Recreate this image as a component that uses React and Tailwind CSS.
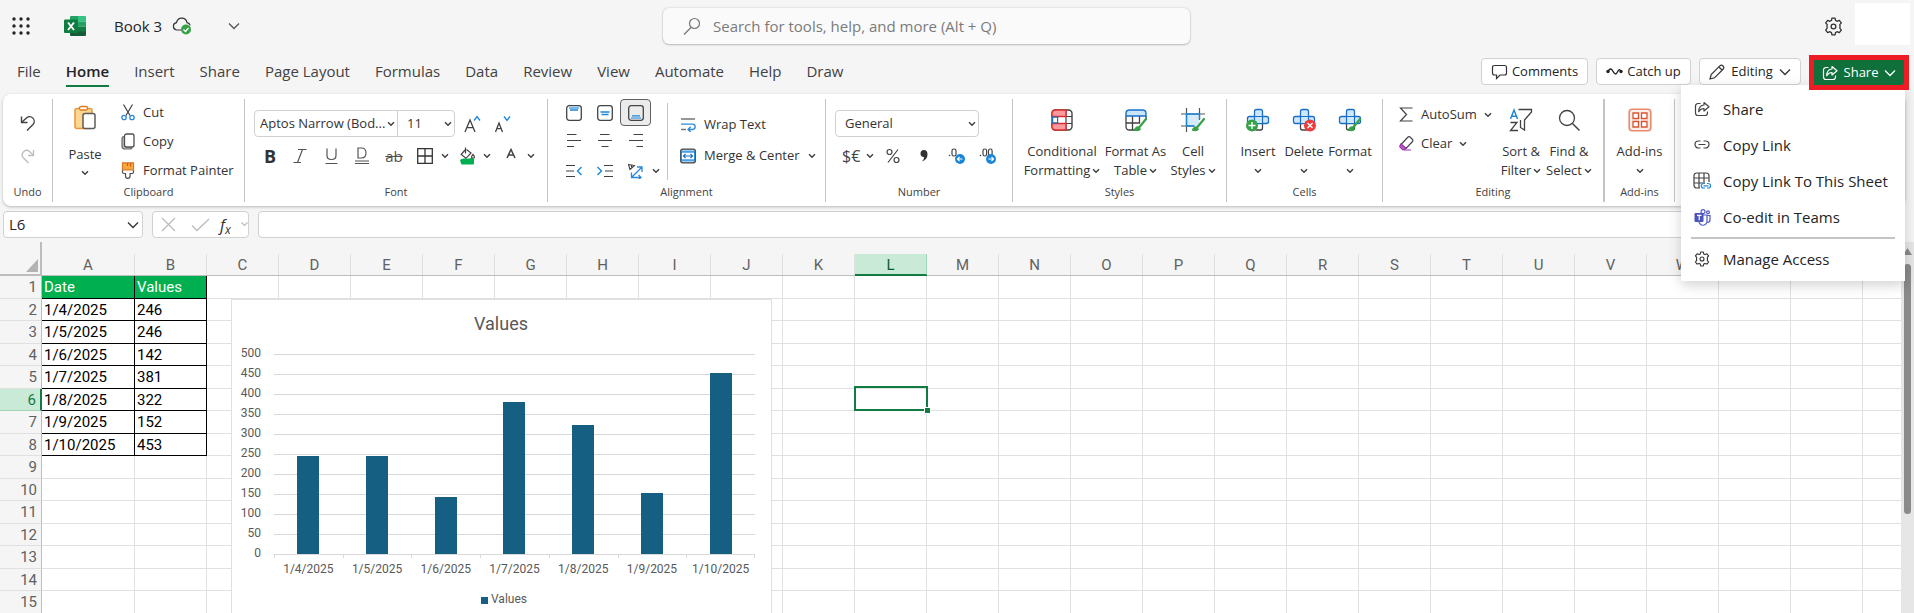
import { useState } from 'react';

const COLUMNS = 'CDEFGHIJKLMNOPQRSTUVWXYZ'.split('');
const ROWS = [1, 2, 3, 4, 5, 6, 7, 8, 9, 10, 11, 12, 13, 14, 15];

const DATA = [
    { date: '1/4/2025', value: 246 },
    { date: '1/5/2025', value: 246 },
    { date: '1/6/2025', value: 142 },
    { date: '1/7/2025', value: 381 },
    { date: '1/8/2025', value: 322 },
    { date: '1/9/2025', value: 152 },
    { date: '1/10/2025', value: 453 },
];

const TABS = ['File', 'Home', 'Insert', 'Share', 'Page Layout', 'Formulas', 'Data', 'Review', 'View', 'Automate', 'Help', 'Draw'];

function Svg({ w = 16, h = 16, className = '', children }) {
    return (
        <svg width={w} height={h} viewBox={`0 0 ${w} ${h}`} fill="none" stroke="#424242" strokeWidth="1.2" className={`shrink-0 ${className}`} aria-hidden="true">
            {children}
        </svg>
    );
}

function Chevron({ className = '' }) {
    return (
        <Svg w={8} h={6} className={className}>
            <path d="M1 1.2 4 4.2 7 1.2" strokeWidth="1.5" />
        </Svg>
    );
}

function WideChevron({ stroke = '#333' }) {
    return (
        <Svg w={12} h={8}>
            <path d="M1 1.5 6 6.5 11 1.5" stroke={stroke} strokeWidth="1.3" />
        </Svg>
    );
}

function ShareIcon({ stroke = '#424242' }) {
    return (
        <Svg w={16} h={16}>
            <path d="M6.5 2.5H4A2.5 2.5 0 0 0 1.5 5v7A2.5 2.5 0 0 0 4 14.5h7a2.5 2.5 0 0 0 2.5-2.5v-1.5" stroke={stroke} />
            <path d="M10 1.500 15 5.800 10 10V7.500C7.500 7.500 6 8.500 4.700 10.700 4.800 7 6.500 4.200 10 4Z" stroke={stroke} strokeLinejoin="round" />
        </Svg>
    );
}

function GearIcon({ size = 16 }) {
    return (
        <svg width={size} height={size} viewBox="0 0 16 16" fill="none" stroke="#333" strokeWidth="1.1" strokeLinejoin="round" className="shrink-0" aria-hidden="true">
            <path d="M6.7 1h2.600l.4 1.900 1.300.7 1.900-.8 1.700 2.100-1.300 1.500.2 1.600-.2 1.400 1.300 1.600-1.700 2.100-1.900-.7-1.300.7-.4 1.900H6.700l-.4-1.900-1.300-.7-1.900.7L1.400 11l1.300-1.600L2.500 8l.2-1.600L1.400 4.900l1.700-2.100 1.900.8 1.300-.7Z" />
            <circle cx="8" cy="8" r="2" />
        </svg>
    );
}

function ExcelLogo() {
    return (
        <svg width="22" height="22" viewBox="0 0 22 22" aria-hidden="true">
            <path d="M6 2a1 1 0 0 1 1-1h7v5.500H6Z" fill="#21a366" />
            <path d="M14 1h7a1 1 0 0 1 1 1v4.500h-8Z" fill="#33c481" />
            <path d="M6 6.500h8v5H6Z" fill="#107c41" />
            <path d="M14 6.500h8v5h-8Z" fill="#21a366" />
            <path d="M6 11.500h8V17H6Z" fill="#185c37" />
            <path d="M14 11.500h8V17h-8Z" fill="#107c41" />
            <path d="M6 16.500h16V20a1 1 0 0 1-1 1H7a1 1 0 0 1-1-1Z" fill="#185c37" />
            <rect x="0" y="4.5" width="14" height="13.5" rx="1" fill="#107c41" />
            <path d="m4 7.500 6 7.500M10 7.500 4 15" stroke="#fff" strokeWidth="1.9" />
        </svg>
    );
}

function UndoIcon() {
    return (
        <Svg w={16} h={16}>
            <path d="M1.500 1.500v6h6" strokeWidth="1.4" />
            <path d="M2 7 6.500 3a4.600 4.600 0 0 1 6.500 6.500L7 15.500" strokeWidth="1.4" />
        </Svg>
    );
}

function RedoIcon() {
    return (
        <Svg w={16} h={16}>
            <path d="M13.500 2v5.500H8" stroke="#bdbdbd" strokeWidth="1.3" />
            <path d="M13 7 9.500 3.500a4.400 4.400 0 0 0-6.200 6.200L8.500 15" stroke="#bdbdbd" strokeWidth="1.3" />
        </Svg>
    );
}

function PasteIcon() {
    return (
        <Svg w={24} h={26}>
            <rect x="2" y="3.5" width="17" height="20" rx="2" fill="#fbd78f" stroke="#e8963a" strokeWidth="1.5" />
            <rect x="6.5" y="1.5" width="8" height="3.5" rx="1.5" fill="#fff" stroke="#e07a1f" strokeWidth="1.3" />
            <rect x="10" y="8.5" width="12" height="15" rx="2" fill="#fff" stroke="#5c5c5c" strokeWidth="1.5" />
        </Svg>
    );
}

function CutIcon() {
    return (
        <Svg w={14} h={17}>
            <path d="M2.500.5 9 11.500M11.500.5 5 11.500" />
            <circle cx="3" cy="13.5" r="2.2" stroke="#2b88d8" strokeWidth="1.3" />
            <circle cx="11" cy="13.5" r="2.2" stroke="#2b88d8" strokeWidth="1.3" />
        </Svg>
    );
}

function CopyIcon() {
    return (
        <Svg w={14} h={17}>
            <path d="M3 3.500A2 2 0 0 0 1 5.500v8a2.500 2.500 0 0 0 2.500 2.500H9a2 2 0 0 0 2-1.500" fill="#bdbdbd" stroke="#666" />
            <rect x="3.5" y="1" width="9.5" height="13" rx="2" fill="#fff" stroke="#4d4d4d" strokeWidth="1.3" />
        </Svg>
    );
}

function PainterIcon() {
    return (
        <Svg w={14} h={17}>
            <path d="M1.500 8v2a1.500 1.500 0 0 0 1.500 1.500h1.500V14a2.300 2.300 0 0 0 4.600 0v-2.500H11a1.500 1.500 0 0 0 1.500-1.500V8" fill="#fff" stroke="#4d4d4d" />
            <path d="M1.500.8h11v7h-11Z" fill="#f7a93b" stroke="#d9772b" />
            <path d="M6.500 1v3M9.500 1v3.500" stroke="#c75b12" />
        </Svg>
    );
}

function BordersIcon() {
    return (
        <Svg w={16} h={16}>
            <path d="M.7.7h14.600v14.600H.7ZM8 .7v14.600M.7 8h14.600" stroke="#333" strokeWidth="1.3" />
        </Svg>
    );
}

function BucketIcon() {
    return (
        <Svg w={16} h={18}>
            <path d="M0 13q2-2 5-1.500t6-.5h2l1 1v4.500q0 1-1 1H2q-1 0-1-1Z" fill="#00b050" stroke="none" />
            <path d="M5 3 1.200 7.500 6 11.300 11 6 6.500 2.500M5.500.5v6" fill="#fff" stroke="#444" />
            <path d="M13 7.500q-3 3.500 0 3.500t0-3.500Z" stroke="#444" />
        </Svg>
    );
}

function VAlignIcon({ pos }) {
    return (
        <Svg w={16} h={16}>
            <rect x=".7" y=".7" width="14.6" height="14.6" rx="2.5" stroke="#444" strokeWidth="1.3" />
            {pos === 'top' && <path d="M3 2.800h10" stroke="#7db9ea" strokeWidth="2.2" />}
            {pos === 'top' && <path d="M4 5h8" stroke="#1a86d9" strokeWidth="1.3" />}
            {pos === 'middle' && <path d="M3.500 7h9M4.500 9.500h7" stroke="#1a86d9" strokeWidth="1.3" />}
            {pos === 'bottom' && <path d="M3 13h10" stroke="#7db9ea" strokeWidth="2.2" />}
            {pos === 'bottom' && <path d="M4 10.800h8" stroke="#1a86d9" strokeWidth="1.3" />}
        </Svg>
    );
}

const HALIGN = {
    left: 'M1 1.5h9.5M1 7.5h14M1 13.5h7',
    center: 'M3 1.5h9.5M1 7.5h14M4.5 13.5h7',
    right: 'M5.5 1.5H15M1 7.5h14M8.5 13.5H15',
};

function HAlignIcon({ pos }) {
    return (
        <Svg w={16} h={15}>
            <path d={HALIGN[pos]} />
        </Svg>
    );
}

function IndentIcon({ out }) {
    return (
        <Svg w={16} h={14}>
            <path d={out ? 'M0 1.5h9M0 7h8M0 12.5h9' : 'M7 1.5h9M8 7h8M7 12.5h9'} />
            <path d={out ? 'M15.5 3 11.5 7l4 4' : 'M.5 3l4 4-4 4'} stroke="#1a86d9" strokeWidth="1.4" />
        </Svg>
    );
}

function OrientationIcon() {
    return (
        <Svg w={16} h={16}>
            <path d="m.5 1.500 6 1-4.500 4ZM3 1.800l1 3" stroke="#444" strokeWidth="1.1" />
            <path d="M4 14 13.500 4.500M9 4h5v5M3.500 9.500v5H13M10.500 12l2.500 2.500-2 1.500" stroke="#2b88d8" strokeWidth="1.3" />
        </Svg>
    );
}

function WrapIcon() {
    return (
        <Svg w={16} h={15}>
            <path d="M1 2h14M1 12.500h5" stroke="#777" strokeWidth="1.3" />
            <path d="M1 7.200h11.500a2.500 2.500 0 0 1 0 5.300H8.500M10.700 9.800 8 12.500l2.700 2.500" stroke="#2b88d8" strokeWidth="1.3" />
        </Svg>
    );
}

function MergeIcon() {
    return (
        <Svg w={16} h={16}>
            <rect x=".7" y="1.2" width="14.6" height="13.6" rx="2" stroke="#444" strokeWidth="1.3" fill="#9dcbf1" />
            <rect x="1.3" y="4" width="13.4" height="8" fill="#fff" stroke="#1a86d9" />
            <path d="M3.500 8h9M5.500 6l-2 2 2 2M10.500 6l2 2-2 2" stroke="#1a6fc4" />
        </Svg>
    );
}

function DecimalIcon({ more }) {
    return (
        <Svg w={18} h={18}>
            <circle cx="1.5" cy="8.5" r=".8" fill="#444" stroke="none" />
            <rect x="4" y="2" width={more ? 3.6 : 4} height="7" rx="1.8" />
            {more && <rect x="9.5" y="2" width="3.6" height="7" rx="1.8" />}
            <circle cx="12" cy="12" r="5" fill="#1a86d9" stroke="none" />
            <path d={more ? 'M9.5 12h5M12.5 10l2 2-2 2' : 'M14.5 12h-5M11.5 10l-2 2 2 2'} stroke="#fff" />
        </Svg>
    );
}

function Brush({ x, y }) {
    return (
        <g>
            <path d={`M${x} ${y}l-6.500 8`} stroke="#37a148" strokeWidth="2.2" strokeLinecap="round" />
            <path d={`M${x - 7} ${y + 8}q-4-1-4.500 3.500 4 1 6-1Z`} fill="#37a148" stroke="#37a148" strokeWidth="1" />
        </g>
    );
}

function ConditionalIcon() {
    return (
        <Svg w={24} h={24}>
            <rect x="2" y="2" width="20" height="20" rx="3.5" strokeWidth="1.4" />
            <path d="M16 2v20M2 8.500h20M2 15.500h20" />
            <path d="M16 2H5.500Q2 2 2 5.500v3h14ZM16 22H5.500Q2 22 2 18.500v-3h14Z" fill="#ff9a9f" stroke="#d92f2f" strokeWidth="1.4" />
            <path d="M2.600 9.200h5v5.600h-5Z" fill="#fff" stroke="#1a6fc4" />
        </Svg>
    );
}

function FormatTableIcon() {
    return (
        <Svg w={24} h={24}>
            <path d="M2 8v10.500Q2 22 5.500 22H12M8.500 8v14M15.500 8v7M2 15h14M22 8v4" strokeWidth="1.3" />
            <path d="M2 8V5.500Q2 2 5.500 2h13Q22 2 22 5.500V8Z" fill="#c9e3f8" stroke="#1a6fc4" strokeWidth="1.4" />
            <Brush x={22} y={11} />
        </Svg>
    );
}

function CellStylesIcon() {
    return (
        <Svg w={24} h={24}>
            <path d="M5.500 6h13v12h-13Z" fill="#d5eafa" stroke="none" />
            <path d="M5.500 0v24M18.500 0v12M0 6h24M0 18h13" stroke="#555" />
            <path d="M13.500 18h-8V6h13v5" stroke="#1a86d9" strokeWidth="1.4" />
            <Brush x={23} y={11} />
        </Svg>
    );
}

function CellsIcon({ kind }) {
    return (
        <Svg w={24} h={24}>
            <path d="M8.500 15v5q0 2 2 2h4q2 0 2-2v-5" strokeWidth="1.3" />
            <path d="M8.500 8.500V3.500Q8.500 1.500 10.500 1.500h4Q16.500 1.500 16.500 3.500v5h4Q22.500 8.500 22.500 10.500v3q0 2-2 2h-17q-2 0-2-2v-3q0-2 2-2Z" fill="#d0e7fa" stroke="#1a6fc4" strokeWidth="1.3" />
            <path d="M8.500 8.500h8v7h-8Z" stroke="#1a6fc4" fill="#d0e7fa" />
            {kind === 'insert' && <circle cx="6" cy="17.5" r="6" fill="#37a148" stroke="none" />}
            {kind === 'insert' && <path d="M6 14v7M2.500 17.500h7" stroke="#fff" strokeWidth="1.4" />}
            {kind === 'delete' && <circle cx="18" cy="17.5" r="6" fill="#ee3b3b" stroke="none" />}
            {kind === 'delete' && <path d="m15.500 15 5 5M20.500 15l-5 5" stroke="#fff" strokeWidth="1.4" />}
            {kind === 'format' && <Brush x={22} y={11} />}
        </Svg>
    );
}

function SortIcon() {
    return (
        <Svg w={24} h={24}>
            <path d="M9.500 1.500h13v2.500l-7 8v10l-4-2.500V12" fill="#fff" strokeWidth="1.3" />
            <path d="M1.500 11 5 2l3.500 9M2.500 8.200h5" stroke="#1a86d9" strokeWidth="1.4" />
            <path d="M1.500 14.500H8l-6.500 8H9" strokeWidth="1.3" />
        </Svg>
    );
}

function FindIcon() {
    return (
        <Svg w={24} h={24}>
            <circle cx="10" cy="10" r="7.5" strokeWidth="1.3" />
            <path d="m15.500 15.500 7 7" strokeWidth="1.5" />
        </Svg>
    );
}

function AddinsIcon() {
    return (
        <Svg w={24} h={24}>
            <rect x="1.2" y="1.2" width="21.6" height="21.6" rx="3" stroke="#ea8a6c" fill="#fdeee9" strokeWidth="1.6" />
            <path d="M5 5h5.500v5.500H5ZM13.500 5H19v5.500h-5.500ZM5 13.500h5.500V19H5ZM13.500 13.500H19V19h-5.500Z" fill="#fff" stroke="#d65532" strokeWidth="1.3" />
        </Svg>
    );
}

function EraserIcon() {
    return (
        <Svg w={15} h={15}>
            <path d="m2 8.500 7-7.500q1-.8 2 0l2.500 2.500q.8 1 0 2L7 12.500Z" fill="#fff" stroke="#444" />
            <path d="m2 8-1 1.500q-.5 1 .3 1.800l2 2q.7.7 1.700.2L7 12.500Z" fill="#c25fcb" stroke="#9b2fae" />
            <path d="M5 14h7" stroke="#9b2fae" />
        </Svg>
    );
}

function LinkIcon() {
    return (
        <Svg w={16} h={16}>
            <path d="M6.500 4H4.500a3.500 3.500 0 0 0 0 7h2M9.500 4h2a3.500 3.500 0 0 1 0 7h-2M4.500 7.500h7" />
        </Svg>
    );
}

function SheetLinkIcon() {
    return (
        <Svg w={18} h={18}>
            <path d="M7 16H4Q1 16 1 13V4q0-3 3-3h9q3 0 3 3v6M6 1v15M11 1v10M1 6h15M1 11h9" />
            <path d="M12 11.500h-1.500a2.200 2.200 0 0 0 0 4.500H12M14 11.500h1.300a2.200 2.200 0 0 1 0 4.500H14M10.500 13.800h5" stroke="#2b88d8" />
        </Svg>
    );
}

function TeamsIcon() {
    return (
        <Svg w={17} h={17}>
            <circle cx="9" cy="2.7" r="2" stroke="#5059c9" />
            <circle cx="14" cy="3.3" r="1.4" stroke="#5059c9" />
            <path d="M8 6h5v6a3.800 3.800 0 0 1-8 .5M13 6.500h3v4.500q0 2-2.500 2.500" stroke="#5059c9" />
            <rect x=".5" y="4" width="9" height="9" rx="1" fill="#4b53bc" stroke="none" />
            <path d="M3 6.300h4.500M5.200 6.300v5" stroke="#fff" />
        </Svg>
    );
}

function Waffle() {
    return (
        <svg width="18" height="18" viewBox="0 0 18 18" fill="#242424" aria-hidden="true">
            {[2, 9, 16].map((y) => [2, 9, 16].map((x) => <circle key={`${x}-${y}`} cx={x} cy={y} r="1.7" />))}
        </svg>
    );
}

function CloudSaved() {
    return (
        <Svg w={20} h={18}>
            <path d="M9 13H4.500a3.700 3.700 0 0 1 0-7.300Q5.500 1.200 9.800 1.200t5.200 4.500q2.500.3 3.200 2.600" stroke="#333" />
            <circle cx="14" cy="12.5" r="5" fill="#37a148" stroke="none" />
            <path d="m11.500 12.500 2 2 3-3.500" stroke="#fff" strokeWidth="1.4" />
        </Svg>
    );
}

function RibbonGroup({ label, className, children }) {
    return (
        <section className={`flex shrink-0 flex-col border-[#c4c4c4] ${className}`} aria-label={label}>
            <div className="flex min-h-0 flex-1">{children}</div>
            <div className="mb-[2px] text-center text-[11px] leading-4 text-[#424242]">{label}</div>
        </section>
    );
}

function BigButton({ icon, lines, className = '' }) {
    return (
        <button type="button" className={`flex flex-col items-center whitespace-nowrap pt-[9px] text-[13px] leading-[19px] ${className}`}>
            {icon}
            <span className="mt-[10px]">{lines[0]}</span>
            <span className="flex h-[19px] items-center gap-[2px]">{lines[1]}<Chevron /></span>
        </button>
    );
}

function RibbonSelect({ label, options, className }) {
    return (
        <label className={`relative flex items-center ${className}`}>
            <select aria-label={label} className="h-full w-full appearance-none bg-transparent pl-[5px] text-[13px] outline-none">
                {options.map((o) => <option key={o}>{o}</option>)}
            </select>
            <Chevron className="pointer-events-none absolute right-[2px]" />
        </label>
    );
}

function TitleBar() {
    return (
        <div className="flex h-[52px] items-start">
            <div className="flex h-[52px] w-[663px] items-center pl-3">
                <button type="button" aria-label="Apps"><Waffle /></button>
                <div className="ml-[34px]"><ExcelLogo /></div>
                <span className="ml-7 text-[15px] text-[#242424]">Book 3</span>
                <div className="ml-[10px]"><CloudSaved /></div>
                <button type="button" aria-label="File details" className="ml-9"><WideChevron stroke="#555" /></button>
            </div>
            <label className="mt-2 flex h-9 w-[527px] items-center rounded-md bg-[#fafafa] pl-5 shadow-[0_0_2px_rgba(0,0,0,0.2),0_1px_2px_rgba(0,0,0,0.2)]">
                <Svg w={18} h={18}>
                    <circle cx="11.5" cy="6.5" r="5" stroke="#777" />
                    <path d="M8 10.500 1 17.500" stroke="#777" />
                </Svg>
                <input aria-label="Search" placeholder="Search for tools, help, and more (Alt + Q)" className="ml-3 flex-1 bg-transparent text-[15px] outline-none placeholder:text-[#7a7a7a]" />
            </label>
            <div className="flex flex-1 items-start justify-end gap-3 pr-1">
                <button type="button" aria-label="Settings" className="mt-[17px]"><GearIcon size={19} /></button>
                <div className="mt-[3px] h-[42px] w-[55px] bg-white" />
            </div>
        </div>
    );
}

function MenuItem({ icon, children }) {
    return (
        <button type="button" role="menuitem" className="flex h-9 w-full items-center pl-3">
            <span className="flex w-[18px] justify-center">{icon}</span>
            <span className="ml-3">{children}</span>
        </button>
    );
}

function ShareMenu() {
    return (
        <div role="menu" className="absolute right-1 top-[30px] w-56 bg-white pt-[6px] pb-1 text-[15px] text-[#242424] shadow-[0_4px_12px_rgba(0,0,0,0.18)]">
            <MenuItem icon={<ShareIcon />}>Share</MenuItem>
            <MenuItem icon={<LinkIcon />}>Copy Link</MenuItem>
            <MenuItem icon={<SheetLinkIcon />}>Copy Link To This Sheet</MenuItem>
            <MenuItem icon={<TeamsIcon />}>Co-edit in Teams</MenuItem>
            <div className="mx-[10px] my-[2px] h-[2px] bg-[#c4c4c4]" />
            <MenuItem icon={<GearIcon size={16} />}>Manage Access</MenuItem>
        </div>
    );
}

function TabBar({ active, onSelect }) {
    const pill = 'mt-[6px] flex h-[27px] items-center justify-center rounded border border-[#d1d1d1] bg-white text-[13px] text-[#242424]';
    return (
        <div className="flex h-[42px] items-start pr-[5px]">
            <nav className="flex gap-[25px] pl-[17px] pt-[7px]">
                {TABS.map((tab) => (
                    <button
                        key={tab}
                        type="button"
                        onClick={() => onSelect(tab)}
                        className={`border-b-2 pb-[2px] text-[15px] leading-6 whitespace-nowrap ${tab === active ? 'border-[#107c41] font-semibold text-[#242424]' : 'border-transparent text-[#424242]'}`}
                    >
                        {tab}
                    </button>
                ))}
            </nav>
            <div className="ml-auto flex gap-2">
                <button type="button" className={`${pill} w-[107px] gap-1`}>
                    <Svg w={17} h={16}>
                        <path d="M3.500 1.500h10q2 0 2 2v5.500q0 2-2 2H9L5.500 14.500V11h-2q-2 0-2-2V3.500q0-2 2-2Z" stroke="#333" />
                    </Svg>
                    Comments
                </button>
                <button type="button" className={`${pill} w-[95px] gap-1`}>
                    <Svg w={17} h={12}>
                        <path d="M2 5.500Q4.500 1 6.500 4.500t3 3.500 2.500-3 3 .5" stroke="#222" strokeWidth="1.4" />
                        <circle cx="2" cy="5.5" r="1.7" fill="#222" stroke="none" />
                        <circle cx="15" cy="5.5" r="1.7" fill="#222" stroke="none" />
                    </Svg>
                    Catch up
                </button>
                <button type="button" className={`${pill} w-[102px] gap-[6px]`}>
                    <Svg w={16} h={16}>
                        <path d="m1 15 1.200-4.500L11 1.700q1.500-1.200 3 .3t.3 3L5.500 13.800ZM10 3l3 3" stroke="#333" />
                    </Svg>
                    Editing
                    <WideChevron />
                </button>
                <div className="relative mt-[3px]">
                    <div className="relative z-10 border-[5px] border-[#ee1c25] bg-[#ee1c25]">
                        <button type="button" aria-haspopup="menu" className="flex h-[25px] w-[90px] items-center justify-center gap-[6px] rounded-br bg-[#0f703b] text-[13px] font-medium text-white">
                            <ShareIcon stroke="#fff" />
                            Share
                            <WideChevron stroke="#fff" />
                        </button>
                    </div>
                    <ShareMenu />
                </div>
            </div>
        </div>
    );
}

function Ribbon() {
    const [vAlign, setVAlign] = useState('bottom');
    const row = 'flex items-center';
    return (
        <div className="ml-[3px] mr-[9px] flex h-[112px] overflow-hidden rounded-lg bg-white pt-[5px] pb-1 text-[#333] shadow-[0_1px_3px_rgba(0,0,0,0.25)]">
            <RibbonGroup label="Undo" className="w-[50px] border-r">
                <div className="flex w-full flex-col items-center gap-[17px] pt-4">
                    <button type="button" aria-label="Undo"><UndoIcon /></button>
                    <button type="button" aria-label="Redo"><RedoIcon /></button>
                </div>
            </RibbonGroup>

            <RibbonGroup label="Clipboard" className="w-48 border-r">
                <button type="button" className="ml-[11px] flex w-[42px] flex-col items-center pt-[6px] text-[13px] leading-[19px]">
                    <PasteIcon />
                    <span className="mt-[14px]">Paste</span>
                    <Chevron className="mt-[6px]" />
                </button>
                <div className="ml-[15px] flex flex-col gap-[10px] pt-1 text-[13px] leading-[19px]">
                    <button type="button" className={`${row} gap-2`}><CutIcon />Cut</button>
                    <button type="button" className={`${row} gap-2`}><CopyIcon />Copy</button>
                    <button type="button" className={`${row} gap-2 whitespace-nowrap`}><PainterIcon />Format Painter</button>
                </div>
            </RibbonGroup>

            <RibbonGroup label="Font" className="w-[303px] border-r">
                <div className="w-full pl-[9px] pt-[11px]">
                    <div className={row}>
                        <div className="flex h-[27px] rounded border border-[#d1d1d1]">
                            <RibbonSelect label="Font name" options={['Aptos Narrow (Bod...']} className="w-[143px] border-r border-[#d1d1d1]" />
                            <RibbonSelect label="Font size" options={['11']} className="w-14 pl-1" />
                        </div>
                        <button type="button" aria-label="Grow font" className="ml-[9px]">
                            <Svg w={17} h={18}>
                                <path d="M1 17 6 5l5 12M2.800 12.700h6.400" strokeWidth="1.3" />
                                <path d="m10 5.500 3-4 3 4" stroke="#1a86d9" strokeWidth="1.3" />
                            </Svg>
                        </button>
                        <button type="button" aria-label="Shrink font" className="ml-[13px]">
                            <Svg w={17} h={18}>
                                <path d="M1.500 17 5 8l3.500 9M2.800 13.700h4.500" strokeWidth="1.3" />
                                <path d="m10 1.500 3 4 3-4" stroke="#1a86d9" strokeWidth="1.3" />
                            </Svg>
                        </button>
                    </div>
                    <div className="mt-[9px] flex h-5 items-center pl-2 text-lg leading-5 text-[#555]">
                        <button type="button" className="w-4 font-bold text-[#333]">B</button>
                        <button type="button" aria-label="Italic" className="ml-[15px]">
                            <Svg w={14} h={16}><path d="M5 1.500h8.500M.5 14.500H8M9.500 1.500l-5 13" stroke="#555" /></Svg>
                        </button>
                        <button type="button" aria-label="Underline" className="ml-[18px]">
                            <Svg w={13} h={17}><path d="M2 .5v7q0 4 4.500 4t4.500-4v-7M.5 15.500h12" stroke="#555" /></Svg>
                        </button>
                        <button type="button" aria-label="Double underline" className="ml-[17px]">
                            <Svg w={14} h={18}><path d="M3 1h3.500q4.500 0 4.500 5t-4.500 5H3ZM0 14h14M0 16.500h14" stroke="#555" /></Svg>
                        </button>
                        <button type="button" className="ml-4 w-[18px] text-center text-[15px] line-through">ab</button>
                        <button type="button" aria-label="Borders" className="ml-[14px] flex items-center gap-[8px]"><BordersIcon /><Chevron /></button>
                        <button type="button" aria-label="Fill color" className="ml-[11px] flex items-center gap-[7px]"><BucketIcon /><Chevron /></button>
                        <button type="button" aria-label="Font color" className="ml-[15px] flex items-center gap-[11px]">
                            <Svg w={10} h={16}><path d="M1 10 5 1.500 9 10M2.500 7h5" strokeWidth="1.5" /></Svg>
                            <Chevron />
                        </button>
                    </div>
                </div>
            </RibbonGroup>

            <RibbonGroup label="Alignment" className="w-[278px] border-r">
                <div className="w-[119px] pl-[10px]">
                    <div className={row}>
                        {['top', 'middle', 'bottom'].map((pos) => (
                            <button
                                key={pos}
                                type="button"
                                aria-label={`Align ${pos}`}
                                onClick={() => setVAlign(pos)}
                                className={`flex h-[27px] w-[31px] items-center justify-center rounded border ${vAlign === pos ? 'border-[#616161] bg-[#ebebeb]' : 'border-transparent'}`}
                            >
                                <VAlignIcon pos={pos} />
                            </button>
                        ))}
                    </div>
                    <div className="flex h-7 items-center">
                        {['left', 'center', 'right'].map((pos) => (
                            <button key={pos} type="button" aria-label={`Align ${pos}`} className="flex w-[31px] justify-center"><HAlignIcon pos={pos} /></button>
                        ))}
                    </div>
                    <div className="flex h-[33px] items-center">
                        <button type="button" aria-label="Decrease indent" className="flex w-[31px] justify-center"><IndentIcon out /></button>
                        <button type="button" aria-label="Increase indent" className="flex w-[31px] justify-center"><IndentIcon /></button>
                        <button type="button" aria-label="Orientation" className="ml-2 flex items-center gap-2"><OrientationIcon /><Chevron /></button>
                    </div>
                </div>
                <div className="mt-1 h-[77px] w-px bg-[#c4c4c4]" />
                <div className="flex flex-col gap-3 pl-3 pt-4 text-[13px] leading-[19px] whitespace-nowrap">
                    <button type="button" className={`${row} gap-2`}><WrapIcon />Wrap Text</button>
                    <button type="button" className={`${row} gap-2`}><MergeIcon /><span>Merge &amp; Center</span><Chevron /></button>
                </div>
            </RibbonGroup>

            <RibbonGroup label="Number" className="w-[187px] border-r">
                <div className="pl-[9px] pt-[11px]">
                    <RibbonSelect label="Number format" options={['General']} className="h-[27px] w-36 rounded border border-[#d1d1d1] pl-1" />
                    <div className="mt-[9px] flex h-5 items-center pl-[7px] text-base text-[#444]">
                        <button type="button" className="flex w-8 items-center justify-between">$€<Chevron /></button>
                        <button type="button" aria-label="Percent style" className="ml-3">
                            <Svg w={14} h={16}>
                                <circle cx="3.5" cy="4" r="2.5" />
                                <circle cx="10.5" cy="12" r="2.5" />
                                <path d="M12 1.500 2 14.500" />
                            </Svg>
                        </button>
                        <button type="button" aria-label="Comma style" className="ml-[19px]">
                            <Svg w={10} h={14}>
                                <path d="M5 1q3.500 0 3.500 4.500 0 5-5.500 7 2.500-2 2-4.500H5a3.500 3.500 0 0 1 0-7Z" fill="#333" stroke="none" />
                            </Svg>
                        </button>
                        <button type="button" aria-label="Decrease decimal" className="ml-[19px]"><DecimalIcon /></button>
                        <button type="button" aria-label="Increase decimal" className="ml-[13px]"><DecimalIcon more /></button>
                    </div>
                </div>
            </RibbonGroup>

            <RibbonGroup label="Styles" className="w-[214px] border-r">
                <BigButton icon={<ConditionalIcon />} lines={['Conditional', 'Formatting']} className="ml-[10px] w-[78px]" />
                <BigButton icon={<FormatTableIcon />} lines={['Format As', 'Table']} className="w-[69px]" />
                <BigButton icon={<CellStylesIcon />} lines={['Cell', 'Styles']} className="w-[46px]" />
            </RibbonGroup>

            <RibbonGroup label="Cells" className="w-[156px] border-r">
                <BigButton icon={<CellsIcon kind="insert" />} lines={['Insert']} className="ml-2 w-[46px]" />
                <BigButton icon={<CellsIcon kind="delete" />} lines={['Delete']} className="w-[46px]" />
                <BigButton icon={<CellsIcon kind="format" />} lines={['Format']} className="w-[46px]" />
            </RibbonGroup>

            <RibbonGroup label="Editing" className="w-[222px] border-r-2">
                <div className="flex w-[114px] flex-col items-start gap-[10px] pl-4 pt-[6px] text-[13px] leading-[19px]">
                    <button type="button" className={`${row} gap-[7px]`}>
                        <Svg w={15} h={15}><path d="M13.500 1h-12l6 6.500-6 6.500h12" /></Svg>
                        <span>AutoSum</span>
                        <Chevron />
                    </button>
                    <button type="button" className={`${row} gap-[7px]`}><EraserIcon /><span>Clear</span><Chevron /></button>
                </div>
                <BigButton icon={<SortIcon />} lines={['Sort &', 'Filter']} className="w-12" />
                <BigButton icon={<FindIcon />} lines={['Find &', 'Select']} className="w-12" />
            </RibbonGroup>

            <RibbonGroup label="Add-ins" className="w-[70px] border-r">
                <BigButton icon={<AddinsIcon />} lines={['Add-ins']} className="w-full" />
            </RibbonGroup>
        </div>
    );
}

function FormulaBar() {
    return (
        <div className="flex h-9 gap-[9px] pl-[3px] pr-[9px] pt-[5px] pb-1">
            <label className="flex w-[140px] items-center rounded border border-[#d1d1d1] bg-white pr-[3px]">
                <input aria-label="Name box" defaultValue="L6" className="w-0 flex-1 pl-[5px] text-[15px] text-[#242424] outline-none" />
                <WideChevron />
            </label>
            <div className="flex w-[97px] items-center rounded border border-[#d1d1d1] bg-white pl-2">
                <Svg w={15} h={15}><path d="m1 1 13 13M14 1 1 14" stroke="#bdbdbd" strokeWidth="1.4" /></Svg>
                <Svg w={19} h={15} className="ml-[15px]"><path d="m1 8.500 5 5L18 2" stroke="#bdbdbd" strokeWidth="1.4" /></Svg>
                <span className="ml-[10px] w-4 text-base leading-5 text-[#333] italic">f<sub className="text-xs">x</sub></span>
                <Svg w={7} h={5} className="ml-[5px]"><path d="m.5.5 3 3 3-3" stroke="#bdbdbd" /></Svg>
            </div>
            <input aria-label="Formula bar" className="min-w-0 flex-1 rounded border border-[#d1d1d1] bg-white px-2 outline-none" />
        </div>
    );
}

function ValuesChart() {
    const left = 42;
    const base = 255;
    const step = 481 / DATA.length;
    return (
        <div className="absolute top-[57px] left-[231px] z-10 border border-[#e0e0e0] bg-white">
            <svg width="539" height="330" viewBox="0 0 539 330" role="img" aria-label="Values" className="font-[Roboto,sans-serif]" fill="#595959" fontSize="12">
                <text x="269" y="30" fontSize="18" textAnchor="middle">Values</text>
                {[0, 50, 100, 150, 200, 250, 300, 350, 400, 450, 500].map((tick) => (
                    <g key={tick}>
                        <rect x={left} y={base - tick * 0.4 - 1} width="481" height="1" fill="#d9d9d9" />
                        <text x="29" y={base - tick * 0.4 + 2} textAnchor="end">{tick}</text>
                    </g>
                ))}
                {DATA.map((d, i) => (
                    <g key={d.date}>
                        <rect x={left + Math.round(i * step)} y={base} width="1" height="3" fill="#d9d9d9" />
                        <rect x={left + Math.round((i + 0.5) * step) - 11} y={base - Math.round(d.value * 0.4) - 1} width="22" height={Math.round(d.value * 0.4)} fill="#156082" />
                        <text x={left + (i + 0.5) * step} y={base + 18} textAnchor="middle">{d.date}</text>
                    </g>
                ))}
                <rect x={left + 480} y={base} width="1" height="3" fill="#d9d9d9" />
                <rect x="249" y="297" width="7" height="7" fill="#156082" />
                <text x="259" y="303">Values</text>
            </svg>
        </div>
    );
}

function Sheet() {
    return (
        <div className="relative flex min-h-0 flex-1 font-[Roboto,sans-serif] text-[15px] leading-5">
            <div className="relative flex-1 overflow-hidden">
                <table className="w-0 table-fixed border-separate border-spacing-0">
                    <colgroup>
                        <col className="w-[42px]" />
                        <col className="w-[93px]" />
                        <col className="w-[72px]" />
                        {COLUMNS.map((c) => <col key={c} className="w-[72px]" />)}
                    </colgroup>
                    <thead className="text-[#616161]">
                        <tr className="h-[34px]">
                            <td className="border-r-2 border-b-2 border-[#bdbdbd] p-0 align-bottom">
                                <svg width="12" height="13" viewBox="0 0 12 13" className="mb-[2px] ml-[26px] block" aria-hidden="true"><path d="M12 0v13H0Z" fill="#b3b3b3" /></svg>
                            </td>
                            {['A', 'B', ...COLUMNS].map((c) => (
                                <th key={c} scope="col" className={`border-b p-0 align-bottom font-normal ${c === 'L' ? 'border-[#107c41]' : 'border-[#bdbdbd]'}`}>
                                    <div className={`h-[21px] border-r pt-px ${c === 'L' ? 'border-b border-r-[#9fd5b7] border-b-[#107c41] bg-[#caead8] text-[#0e5c2f]' : 'border-[#e0e0e0]'}`}>{c}</div>
                                </th>
                            ))}
                        </tr>
                    </thead>
                    <tbody className="bg-white text-black">
                        {ROWS.map((r) => {
                            const item = DATA[r - 2];
                            const filled = r <= 8;
                            const cell = `border-r border-b p-0 pl-[2px] ${filled ? 'border-black' : 'border-[#e0e0e0]'} ${r === 1 ? 'bg-[#00b050] text-white' : ''}`;
                            return (
                                <tr key={r} className="h-[23px] even:h-[22px]">
                                    <th scope="row" className={`border-b p-0 pr-1 text-right font-normal ${r === 6 ? 'border-r-2 border-r-[#107c41] border-b-[#9fd5b7] bg-[#caead8] text-[#107c41]' : 'border-r border-r-[#bdbdbd] border-b-[#e0e0e0] bg-[#f5f5f5] text-[#616161]'}`}>{r}</th>
                                    <td className={cell}>{r === 1 ? 'Date' : item?.date}</td>
                                    <td className={cell}>{r === 1 ? 'Values' : item?.value}</td>
                                    {COLUMNS.map((c) => (
                                        <td key={c} className="relative border-r border-b border-[#e0e0e0] p-0">
                                            {c === 'L' && r === 6 && (
                                                <div className="absolute -top-[3px] -right-[2px] -bottom-px -left-px z-10 border-2 border-[#107c41]">
                                                    <div className="absolute -right-[5px] -bottom-[5px] h-[7px] w-[7px] border border-white bg-[#107c41]" />
                                                </div>
                                            )}
                                        </td>
                                    ))}
                                </tr>
                            );
                        })}
                    </tbody>
                </table>
                <ValuesChart />
            </div>
            <div className="flex w-[13px] flex-col items-center bg-[#e6e6e6] pt-[6px]">
                <svg width="9" height="7" viewBox="0 0 9 7" aria-hidden="true"><path d="M4.500 0 9 7H0Z" fill="#8a8a8a" /></svg>
                <div className="mt-[9px] h-[250px] w-[7px] rounded-full bg-[#8a8a8a]" />
            </div>
        </div>
    );
}

export default function App() {
    const [tab, setTab] = useState('Home');

    return (
        <div className="flex h-screen flex-col overflow-hidden bg-[#f5f5f5] font-['Open_Sans',sans-serif]">
            <header className="relative z-20">
                <TitleBar />
                <TabBar active={tab} onSelect={setTab} />
            </header>
            <Ribbon />
            <FormulaBar />
            <Sheet />
        </div>
    );
}
